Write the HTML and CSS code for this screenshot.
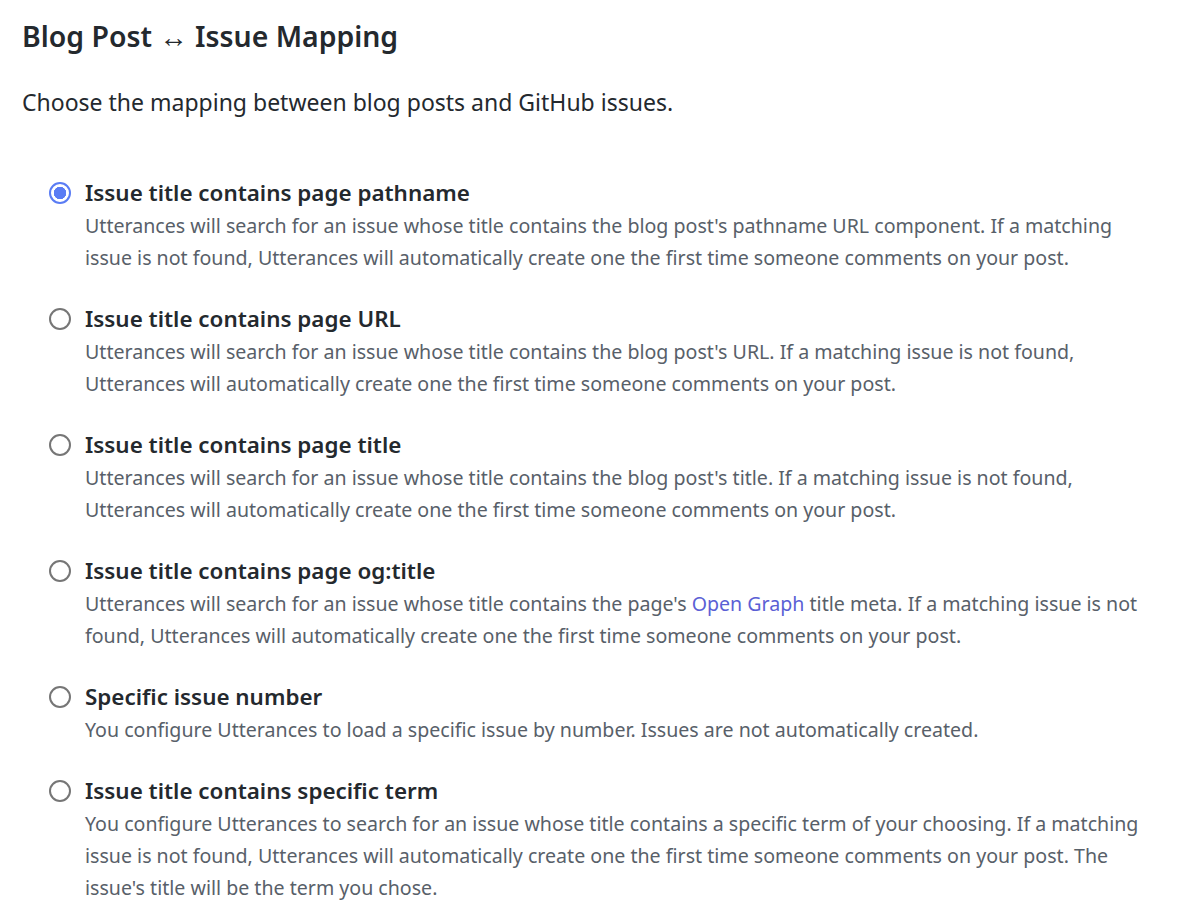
FILE: index.html
```html
<!DOCTYPE html>
<html>
<head>
<meta charset="utf-8">
<link rel="stylesheet" href="styles.css">
</head>
<body>
<main class="page">
  <h3 class="heading">Blog Post ↔ Issue Mapping</h3>
  <p class="intro">Choose the mapping between blog posts and GitHub issues.</p>
  <fieldset class="options">
    <label class="option">
      <input type="radio" name="mapping" value="pathname" checked>
      <span class="option-body">
        <strong class="option-title">Issue title contains page pathname</strong>
        <span class="option-desc">Utterances will search for an issue whose title contains the blog post's pathname URL component. If a matching issue is not found, Utterances will automatically create one the first time someone comments on your post.</span>
      </span>
    </label>
    <label class="option">
      <input type="radio" name="mapping" value="url">
      <span class="option-body">
        <strong class="option-title">Issue title contains page URL</strong>
        <span class="option-desc">Utterances will search for an issue whose title contains the blog post's URL. If a matching issue is not found, Utterances will automatically create one the first time someone comments on your post.</span>
      </span>
    </label>
    <label class="option">
      <input type="radio" name="mapping" value="title">
      <span class="option-body">
        <strong class="option-title">Issue title contains page title</strong>
        <span class="option-desc">Utterances will search for an issue whose title contains the blog post's title. If a matching issue is not found, Utterances will automatically create one the first time someone comments on your post.</span>
      </span>
    </label>
    <label class="option">
      <input type="radio" name="mapping" value="og:title">
      <span class="option-body">
        <strong class="option-title">Issue title contains page og:title</strong>
        <span class="option-desc">Utterances will search for an issue whose title contains the page's <a class="link" href="#">Open Graph</a> title meta. If a matching issue is not found, Utterances will automatically create one the first time someone comments on your post.</span>
      </span>
    </label>
    <label class="option">
      <input type="radio" name="mapping" value="number">
      <span class="option-body">
        <strong class="option-title">Specific issue number</strong>
        <span class="option-desc">You configure Utterances to load a specific issue by number. Issues are not automatically created.</span>
      </span>
    </label>
    <label class="option">
      <input type="radio" name="mapping" value="specific-term">
      <span class="option-body">
        <strong class="option-title">Issue title contains specific term</strong>
        <span class="option-desc">You configure Utterances to search for an issue whose title contains a specific term of your choosing. If a matching issue is not found, Utterances will automatically create one the first time someone comments on your post. The issue's title will be the term you chose.</span>
      </span>
    </label>
  </fieldset>
</main>
</body>
</html>
```
FILE: styles.css
```css
html, body {
  margin: 0;
  padding: 0;
  background: #ffffff;
}
body {
  font-family: "Noto Sans", "Open Sans", sans-serif;
  color: #24292e;
}
.page {
  padding: 14px 40px 0 22px;
}
.heading {
  margin: 0;
  font-size: 28.4px;
  font-weight: 600;
  line-height: 44px;
}
.intro {
  margin: 27px 0 0 0;
  font-size: 23px;
  line-height: 34px;
}
.options {
  border: 0;
  margin: 56px 0 0 0;
  padding: 0 0 0 27px;
  display: flex;
  flex-direction: column;
  gap: 27px;
}
.option {
  display: flex;
  align-items: flex-start;
  gap: 14px;
}
.option input {
  appearance: none;
  -webkit-appearance: none;
  margin: 7px 0 0 0;
  width: 22px;
  height: 22px;
  border: 2px solid #767676;
  border-radius: 50%;
  flex: none;
  box-sizing: border-box;
  background: #fff;
}
.option input:checked {
  border-color: #5a7cf4;
  background: radial-gradient(circle, #5a7cf4 0 6px, #fff 6.5px);
}
.option-body {
  display: flex;
  flex-direction: column;
}
.option-title {
  font-size: 22.4px;
  font-weight: 600;
  line-height: 35px;
  color: #24292e;
}
.option-desc {
  font-size: 19.6px;
  line-height: 32px;
  color: #586069;
}
.link {
  color: #5b5fd5;
  text-decoration: none;
}
```
